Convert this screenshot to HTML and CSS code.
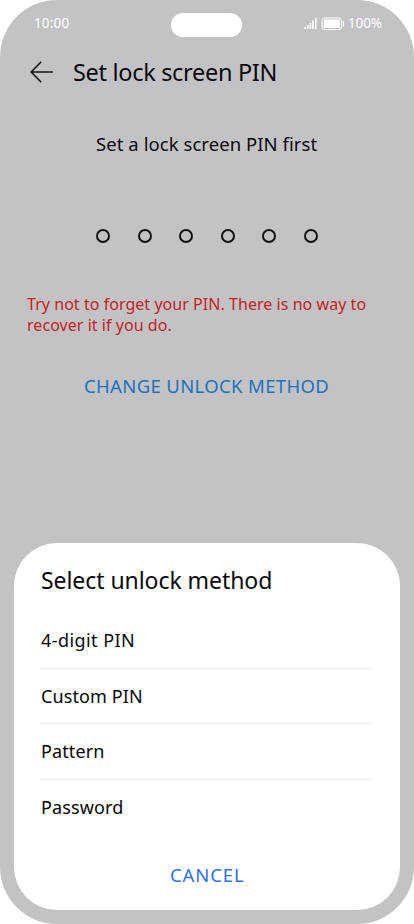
FILE: index.html
```html
<!DOCTYPE html>
<html lang="en">
<head>
<meta charset="utf-8">
<title>Set lock screen PIN</title>
<link rel="stylesheet" href="styles.css">
</head>
<body>
<div class="screen">
  <div class="status">
    <span class="time">10:00</span>
    <span class="island"></span>
    <span class="indicators">
      <svg class="signal" width="14" height="13" viewBox="0 0 14 13"><path d="M1.2 10v2M3.8 8.2V12M6.4 6v6M9 3.3V12M11.8 .7V12" fill="none" stroke="#fff" stroke-width="1.6"/></svg>
      <svg class="battery" width="24" height="14" viewBox="0 0 24 14"><rect x="1" y="1" width="19.4" height="11.6" rx="2.6" fill="none" stroke="#fff" stroke-width="1"/><rect x="2.6" y="2.6" width="16.2" height="8.4" rx="1.2" fill="#fff"/><path d="M22.3 4v5.6" stroke="#fff" stroke-width="1.4"/></svg>
      <span class="percent">100%</span>
    </span>
  </div>
  <header class="header">
    <svg class="back" width="26" height="24" viewBox="0 0 26 24"><path d="M12.2 1.8L2.2 12l10 10.2M2.2 12H24" fill="none" stroke="#141416" stroke-width="1.6"/></svg>
    <h1 class="title">Set lock screen PIN</h1>
  </header>
  <p class="prompt">Set a lock screen PIN first</p>
  <div class="dots"><i></i><i></i><i></i><i></i><i></i><i></i></div>
  <p class="warning">Try not to forget your PIN. There is no way to<br>recover it if you do.</p>
  <div class="change">CHANGE UNLOCK METHOD</div>
  <section class="sheet">
    <h2 class="sheet-title">Select unlock method</h2>
    <ul class="options">
      <li class="digit">4-digit PIN</li>
      <li>Custom PIN</li>
      <li>Pattern</li>
      <li>Password</li>
    </ul>
    <div class="cancel">CANCEL</div>
  </section>
</div>
</body>
</html>
```
FILE: styles.css
```css
* { box-sizing: border-box; }
body { margin: 0; background: #fff; font-family: "Noto Sans", sans-serif; color: #080809; }
h1, h2, p, ul { margin: 0; padding: 0; font-weight: 400; }
.screen { display: flex; flex-direction: column; width: 414px; height: 924px; overflow: hidden; background: #c3c3c5; border-radius: 57px; white-space: nowrap; }
.status { display: grid; grid-template-columns: 137px 71px 1fr; height: 37px; padding: 13px 0 0 34px; color: #fff; font-size: 13.5px; line-height: 21px; }
.time { letter-spacing: .15px; }
.island { height: 24px; background: #fff; border-radius: 12px; }
.indicators { display: flex; padding-left: 62px; }
.signal { margin-top: 4px; }
.battery { margin: 4px 0 0 3px; }
.percent { margin-left: 3px; letter-spacing: -.15px; }
.header { display: flex; align-items: center; height: 70px; padding-left: 29px; }
.title { margin-left: 18px; font-size: 23.5px; line-height: 32px; letter-spacing: -.31px; }
.prompt { margin-top: 24px; padding-left: 96px; font-size: 18.5px; line-height: 26px; letter-spacing: .06px; }
.dots { display: flex; justify-content: space-between; width: 222px; margin: 72px 0 0 96px; }
.dots i { width: 14px; height: 14px; border: 2px solid #111113; border-radius: 50%; }
.warning { margin: 51px 0 0 27px; font-size: 16px; line-height: 21px; letter-spacing: .045px; color: #c32126; }
.change { margin-top: 37px; padding-left: 84px; font-size: 18.5px; line-height: 26px; letter-spacing: .35px; color: #1c72bd; }
.sheet { width: 386px; height: 367.5px; margin: auto 14px 14px; padding: 21px 27px 0; background: #fff; border-radius: 43px; }
.sheet-title { font-size: 23px; line-height: 32px; letter-spacing: -.06px; margin-bottom: 17.5px; }
.options { list-style: none; }
.options li { height: 55.6px; font-size: 18px; line-height: 54.5px; letter-spacing: .12px; border-bottom: 1px solid #ececee; }
.options .digit { letter-spacing: .43px; }
.options li:last-child { border: 0; }
.cancel { margin-top: 27px; padding-left: 129px; font-size: 18.5px; line-height: 26px; letter-spacing: .9px; color: #3470e6; }
```
